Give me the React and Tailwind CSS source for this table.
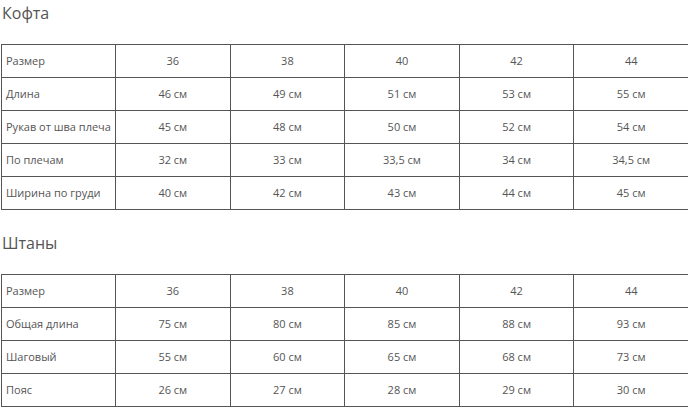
import React from 'react';

const sizes = ['36', '38', '40', '42', '44'];

const jacket = [
    ['Длина', '46 см', '49 см', '51 см', '53 см', '55 см'],
    ['Рукав от шва плеча', '45 см', '48 см', '50 см', '52 см', '54 см'],
    ['По плечам', '32 см', '33 см', '33,5 см', '34 см', '34,5 см'],
    ['Ширина по груди', '40 см', '42 см', '43 см', '44 см', '45 см'],
];

const pants = [
    ['Общая длина', '75 см', '80 см', '85 см', '88 см', '93 см'],
    ['Шаговый', '55 см', '60 см', '65 см', '68 см', '73 см'],
    ['Пояс', '26 см', '27 см', '28 см', '29 см', '30 см'],
];

const SizeTable = ({ title, rows, first }) => (
    <div className={first ? '' : 'mt-[20px]'}>
        <h2 className="h-[26px] pl-[2px] text-[16px] leading-[26px] text-[#555]">{title}</h2>
        <table className="mt-[18px] ml-px w-[688px] table-fixed border-collapse text-[11px] text-[#555]">
            <colgroup>
                <col className="w-[114px]" />
                <col />
                <col />
                <col />
                <col />
                <col />
            </colgroup>
            <tbody>
                {[['Размер', ...sizes], ...rows].map((row) => (
                    <tr key={row[0]} className="h-[33px]">
                        {row.map((cell, i) => (
                            <td
                                key={i}
                                className={`border border-[#555] p-0 ${i === 0 ? 'pl-[4px] text-left' : 'text-center'}`}
                            >
                                {cell}
                            </td>
                        ))}
                    </tr>
                ))}
            </tbody>
        </table>
    </div>
);

export default function App() {
    return (
        <div className="w-[688px] h-[409px] overflow-hidden bg-white font-['Open_Sans',sans-serif]">
            <SizeTable title="Кофта" rows={jacket} first />
            <SizeTable title="Штаны" rows={pants} />
        </div>
    );
}
